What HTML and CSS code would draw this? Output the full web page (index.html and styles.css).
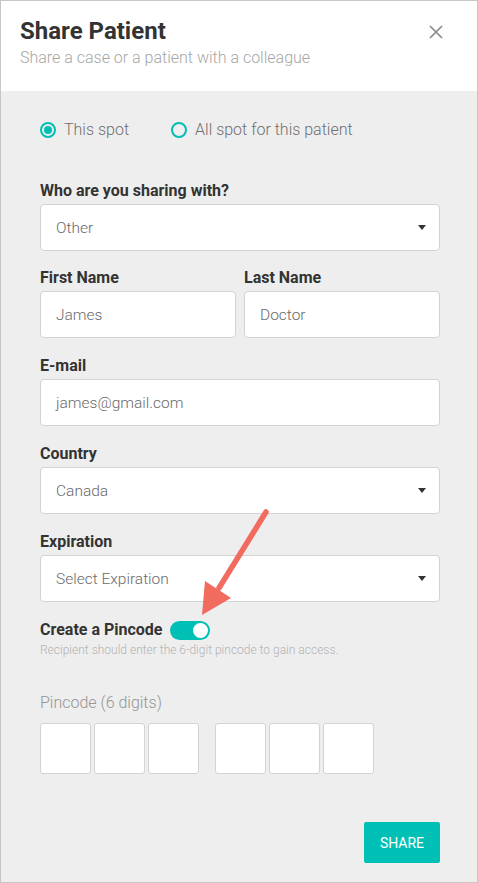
FILE: index.html
```html
<!DOCTYPE html>
<html lang="en">
<head>
<meta charset="utf-8">
<title>Share Patient</title>
<link rel="stylesheet" href="styles.css">
</head>
<body>
<div class="dialog">
  <div class="header">
    <div class="heading">
      <div class="title">Share Patient</div>
      <div class="subtitle">Share a case or a patient with a colleague</div>
    </div>
    <svg class="close" width="14" height="14" viewBox="0 0 14 14" aria-label="Close">
      <path d="M1 1 L13 13 M13 1 L1 13" stroke="#8a8a8a" stroke-width="1.7" fill="none"/>
    </svg>
  </div>
  <div class="content">
    <div class="radios">
      <div class="radio"><span class="radio-circle checked"></span><span>This spot</span></div>
      <div class="radio"><span class="radio-circle"></span><span>All spot for this patient</span></div>
    </div>

    <div class="field first">
      <div class="label">Who are you sharing with?</div>
      <div class="control"><span>Other</span><span class="caret"></span></div>
    </div>

    <div class="row">
      <div class="field">
        <div class="label">First Name</div>
        <div class="control"><span>James</span></div>
      </div>
      <div class="field">
        <div class="label">Last Name</div>
        <div class="control"><span>Doctor</span></div>
      </div>
    </div>

    <div class="field">
      <div class="label">E-mail</div>
      <div class="control"><span>james@gmail.com</span></div>
    </div>

    <div class="field">
      <div class="label">Country</div>
      <div class="control"><span>Canada</span><span class="caret"></span></div>
    </div>

    <div class="field">
      <div class="label">Expiration</div>
      <div class="control"><span>Select Expiration</span><span class="caret"></span></div>
    </div>

    <div class="toggle-row">
      <div class="label inline">Create a Pincode</div>
      <span class="toggle"><span class="knob"></span></span>
    </div>
    <div class="help">Recipient should enter the 6-digit pincode to gain access.</div>

    <div class="pin-label">Pincode (6 digits)</div>
    <div class="pins">
      <span class="pin"></span>
      <span class="pin"></span>
      <span class="pin"></span>
      <span class="pin group-start"></span>
      <span class="pin"></span>
      <span class="pin"></span>
    </div>

    <div class="actions">
      <div class="share">Share</div>
    </div>
  </div>

  <svg class="arrow" width="90" height="125" viewBox="191 501 90 125">
    <path d="M266 512 L219 588" stroke="#f26b5f" stroke-width="5.5" stroke-linecap="round" fill="none"/>
    <polygon points="202,615 231,598 205,581" fill="#f26b5f"/>
  </svg>
</div>
</body>
</html>
```

FILE: styles.css
```css
body {
  margin: 0;
  font-family: Roboto, "Liberation Sans", sans-serif;
}

.dialog {
  position: relative;
  width: 478px;
  height: 883px;
  box-sizing: border-box;
  border: 1px solid #c6c6c6;
  background: #eeeeee;
  display: flex;
  flex-direction: column;
}

.header {
  background: #ffffff;
  height: 90px;
  box-sizing: border-box;
  padding: 16px 34px 0 19px;
  display: flex;
  justify-content: space-between;
  align-items: flex-start;
}

.title {
  font-size: 24px;
  font-weight: 700;
  line-height: 28px;
  color: #333333;
}

.subtitle {
  margin-top: 4px;
  font-size: 16px;
  font-weight: 300;
  line-height: 18px;
  color: #a6a6a6;
}

.close {
  margin-top: 8px;
}

.content {
  flex: 1;
  padding: 31px 37px 0 39px;
}

.radios {
  display: flex;
  align-items: center;
  height: 16px;
}

.radio {
  display: flex;
  align-items: center;
  gap: 8px;
  font-size: 16px;
  font-weight: 300;
  line-height: 18px;
  color: #6f6f6f;
}

.radio + .radio {
  margin-left: 42px;
}

.radio-circle {
  width: 16px;
  height: 16px;
  box-sizing: border-box;
  border: 2px solid #00bfb4;
  border-radius: 50%;
  display: flex;
  align-items: center;
  justify-content: center;
}

.radio-circle.checked::after {
  content: "";
  width: 8px;
  height: 8px;
  border-radius: 50%;
  background: #00bfb4;
}

.field {
  margin-top: 19px;
}

.field.first {
  margin-top: 44px;
}

.label {
  font-size: 16px;
  font-weight: 700;
  line-height: 18px;
  color: #333333;
  margin-bottom: 4px;
}

.label.inline {
  margin-bottom: 0;
}

.control {
  height: 47px;
  box-sizing: border-box;
  border: 1px solid #d3d3d3;
  border-radius: 4px;
  background: #ffffff;
  display: flex;
  align-items: center;
  padding: 0 13px 0 15px;
  font-size: 15.5px;
  font-weight: 300;
  color: #6a6a6a;
}

.caret {
  margin-left: auto;
  width: 0;
  height: 0;
  border-left: 4.5px solid transparent;
  border-right: 4.5px solid transparent;
  border-top: 5px solid #333333;
}

.row {
  display: flex;
  gap: 8px;
  margin-top: 18px;
}

.row .field {
  flex: 1;
  margin-top: 0;
}

.toggle-row {
  margin-top: 18px;
  height: 20px;
  display: flex;
  align-items: center;
  gap: 8px;
}

.toggle {
  width: 40px;
  height: 19px;
  border-radius: 10px;
  background: #00bfb4;
  display: flex;
  align-items: center;
  justify-content: flex-end;
  padding-right: 2px;
  box-sizing: border-box;
}

.knob {
  width: 15px;
  height: 15px;
  border-radius: 50%;
  background: #ffffff;
}

.help {
  margin-top: 4px;
  font-size: 12px;
  font-weight: 300;
  line-height: 13px;
  color: #b3b3b3;
}

.pin-label {
  margin-top: 37px;
  font-size: 16px;
  font-weight: 300;
  line-height: 18px;
  color: #959595;
}

.pins {
  margin-top: 11px;
  display: flex;
  gap: 3px;
}

.pin {
  width: 51px;
  height: 51px;
  box-sizing: border-box;
  border: 1px solid #d3d3d3;
  border-radius: 3px;
  background: #ffffff;
}

.pin.group-start {
  margin-left: 13px;
}

.actions {
  margin-top: 48px;
  display: flex;
  justify-content: flex-end;
}

.share {
  width: 76px;
  height: 41px;
  border-radius: 2px;
  background: #00c0b5;
  color: #ffffff;
  font-size: 14px;
  text-transform: uppercase;
  display: flex;
  align-items: center;
  justify-content: center;
}

.arrow {
  position: absolute;
  left: 190px;
  top: 500px;
  pointer-events: none;
}
```
